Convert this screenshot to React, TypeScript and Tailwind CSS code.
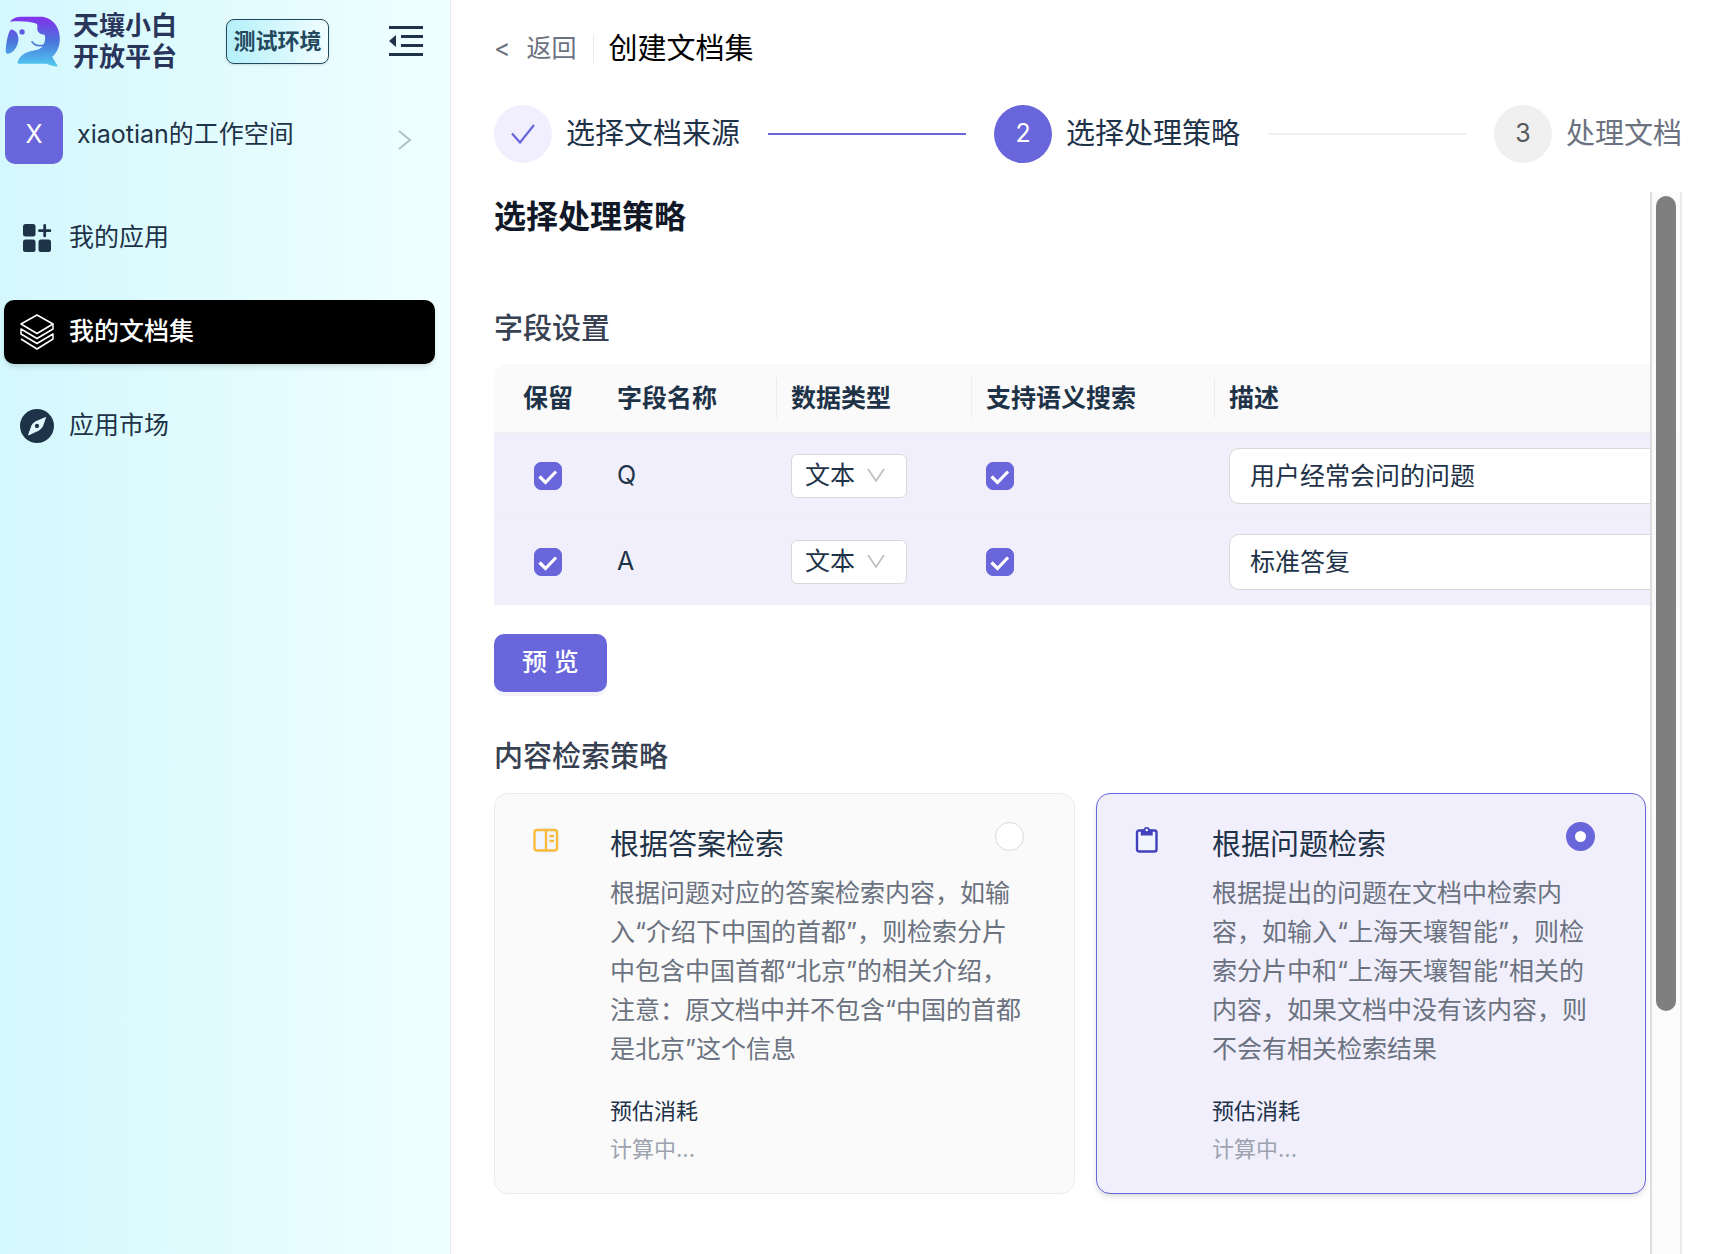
import React, { useState } from 'react';
import clsx from 'clsx';

interface Field {
  name: string;
  keep: boolean;
  semantic: boolean;
  desc: string;
}

interface Strategy {
  id: string;
  title: string;
  desc: string;
  icon: React.ReactNode;
}

const LogoIcon = () => (
  <svg width="56" height="53" viewBox="16 28 168 160" aria-hidden="true">
    <defs>
      <linearGradient id="logo" gradientUnits="userSpaceOnUse" x1="0" y1="33" x2="0" y2="180">
        <stop offset="0" stopColor="#8430ec" />
        <stop offset="0.5" stopColor="#4a74dc" />
        <stop offset="1" stopColor="#50c8f0" />
      </linearGradient>
    </defs>
    <path
      fill="url(#logo)"
      d="M30 48C38 38 50 33 64 33H122C156 33 181 62 181 98C181 122 173 141 158 155L174 181C173 184 170 184 166 183C156 181 148 178 140 175H56C54 175 53 173 54 170C58 152 76 140 100 136C120 133 132 125 134 112C138 102 138 93 134 87C120 87 111 78 113 64C114 58 113 56 109 54C88 47 60 45 30 48Z"
    />
    <path
      fill="url(#logo)"
      d="M33 72C48 73 56 86 56 102C55 125 38 146 22 145C16 143 17 130 20 112C23 94 26 80 33 72Z"
    />
    <circle cx="67" cy="79" r="8" fill="url(#logo)" />
    <path d="M97 109C104 119 118 123 133 119" fill="none" stroke="#4a78dc" strokeWidth="5" strokeLinecap="round" />
  </svg>
);

const CollapseIcon = () => (
  <svg width="34" height="30" viewBox="0 0 34 30" fill="#1e3248" aria-hidden="true">
    <path d="M0 0h34v3H0zM12 9h22v3H12zM12 18h22v3H12zM0 27h34v3H0zM0 15l7-6v12z" />
  </svg>
);

const AppsIcon = () => (
  <svg width="34" height="34" viewBox="0 0 34 34" fill="#1e3248" aria-hidden="true">
    <rect x="3" y="3" width="12.5" height="12.5" rx="2.5" />
    <rect x="3" y="18.5" width="12.5" height="12.5" rx="2.5" />
    <rect x="18.5" y="18.5" width="12.5" height="12.5" rx="2.5" />
    <path d="M24.7 4.5v10.4M19.5 9.7h10.4" stroke="#1e3248" strokeWidth="2.8" strokeLinecap="round" />
  </svg>
);

const LayersIcon = () => (
  <svg width="34" height="36" viewBox="0 0 34 36" fill="none" stroke="#fff" strokeWidth="1.5" strokeLinejoin="round" aria-hidden="true">
    <path d="M17 1L33 10 17 19.5 1 10z" />
    <path d="M33 10v5L17 24.5 1 15v5l16 9.5L33 20v5L17 35 1 25" />
  </svg>
);

const CompassIcon = () => (
  <svg width="34" height="34" viewBox="0 0 35 35" aria-hidden="true">
    <circle cx="17.5" cy="17.5" r="17.5" fill="#1e3248" />
    <path
      d="M26.3 8.8L23 18.2Q21.5 20.5 19.5 21.7L8.8 26.7L12.3 17Q13.5 14.5 16 13.2Z"
      fill="#e0f9fd"
      stroke="#e0f9fd"
      strokeLinejoin="round"
    />
    <circle cx="17.5" cy="17.5" r="2.2" fill="#1e3248" />
  </svg>
);

const BookIcon = () => (
  <svg width="30" height="30" viewBox="0 0 30 30" fill="none" stroke="#f8bb3c" strokeWidth="2.4" aria-hidden="true">
    <circle cx="15" cy="14.5" r="14.5" fill="#f0f5ff" stroke="none" />
    <rect x="3.5" y="4" width="22.5" height="20.5" rx="2.5" />
    <path d="M15 4v20.5M18.5 10h4.5M18.5 15h4.5" />
  </svg>
);

const ClipboardIcon = () => (
  <svg width="30" height="30" viewBox="0 0 30 30" aria-hidden="true">
    <circle cx="14" cy="14.5" r="14" fill="#f0f5ff" />
    <rect x="4" y="4.5" width="19.5" height="21" rx="2" fill="none" stroke="#4340bd" strokeWidth="2.4" />
    <path d="M7.8 3.5h2.7a3.4 3.4 0 0 1 6.5 0h2.700v6H7.800z" fill="#4340bd" />
    <circle cx="13.75" cy="4" r="1.3" fill="#f0f5ff" />
  </svg>
);

const navItems = [
  { label: '我的应用', icon: <AppsIcon /> },
  { label: '我的文档集', icon: <LayersIcon />, active: true },
  { label: '应用市场', icon: <CompassIcon /> },
];

const steps = [
  { label: '选择文档来源', status: 'done' },
  { label: '选择处理策略', status: 'active' },
  { label: '处理文档', status: 'wait' },
];

const strategies: Strategy[] = [
  {
    id: 'answer',
    title: '根据答案检索',
    desc: '根据问题对应的答案检索内容，如输\n入“介绍下中国的首都”，则检索分片\n中包含中国首都“北京”的相关介绍，\n注意：原文档中并不包含“中国的首都\n是北京”这个信息',
    icon: <BookIcon />,
  },
  {
    id: 'question',
    title: '根据问题检索',
    desc: '根据提出的问题在文档中检索内\n容，如输入“上海天壤智能”，则检\n索分片中和“上海天壤智能”相关的\n内容，如果文档中没有该内容，则\n不会有相关检索结果',
    icon: <ClipboardIcon />,
  },
];

const Checkbox: React.FC<{ checked: boolean; label: string; onChange: () => void }> = ({ checked, label, onChange }) => (
  <label className="grid size-7">
    <input
      type="checkbox"
      aria-label={label}
      checked={checked}
      onChange={onChange}
      className="col-start-1 row-start-1 size-7 appearance-none rounded-[7px] border border-[#d9d9d9] bg-white checked:border-[#6965db] checked:bg-[#6965db]"
    />
    {checked && (
      <svg viewBox="0 0 28 28" fill="none" stroke="#fff" strokeWidth="3.2" className="pointer-events-none col-start-1 row-start-1 size-7">
        <path d="M5.5 14.5l6 6L22 9.5" />
      </svg>
    )}
  </label>
);

const Sidebar: React.FC = () => (
  <aside className="w-[451px] shrink-0 border-r border-[#e3eaed] bg-gradient-to-r from-[#d3f8fd] to-[#f0ffff]">
    <div className="flex h-[82px] items-center pl-[5px] pr-[27px]">
      <LogoIcon />
      <div className="ml-3 text-[26px] font-bold leading-[31px] text-[#29355a]">
        <p>天壤小白</p>
        <p>开放平台</p>
      </div>
      <span className="ml-[49px] flex h-[45px] w-[103px] items-center justify-center rounded-lg border border-[#23485e] bg-gradient-to-r from-[#b4f0f9] to-[#f0fdff] text-[22px] font-bold text-[#23485e] shadow-sm">
        测试环境
      </span>
      <button type="button" aria-label="收起菜单" className="ml-auto">
        <CollapseIcon />
      </button>
    </div>

    <button type="button" className="mt-6 flex w-full items-center pl-[5px] pr-[38px] text-[25px] text-[#1e3248]">
      <span className="flex size-[58px] items-center justify-center rounded-[10px] bg-[#6965db] text-white">X</span>
      <span className="ml-[14px]">xiaotian的工作空间</span>
      <svg width="14" height="20" viewBox="0 0 14 20" fill="none" stroke="#b3bfc2" strokeWidth="2" className="ml-auto mt-[10px]">
        <path d="M1 1l11 9L1 19" />
      </svg>
    </button>

    <nav className="mt-[42px] flex flex-col gap-[30px] pl-1 pr-[15px]">
      {navItems.map((item) => (
        <a
          key={item.label}
          href="#"
          className={clsx(
            'flex h-16 items-center gap-[15px] rounded-[10px] pl-4 text-[25px]',
            item.active ? 'bg-black font-medium text-white shadow-md' : 'text-[#1e3248]'
          )}
        >
          {item.icon}
          {item.label}
        </a>
      ))}
    </nav>
  </aside>
);

const Steps: React.FC = () => (
  <ol className="mt-9 flex items-center gap-7 text-[29px]">
    {steps.map((step, index) => (
      <li key={step.label} className={clsx('flex items-center', index < steps.length - 1 && 'flex-1')}>
        <span
          className={clsx(
            'flex size-[58px] shrink-0 items-center justify-center rounded-full text-[25px]',
            step.status === 'done' && 'bg-[#f1effd]',
            step.status === 'active' && 'bg-[#6965db] text-white',
            step.status === 'wait' && 'bg-[#f0f0f0] text-[#595959]'
          )}
        >
          {step.status === 'done' ? (
            <svg width="24" height="20" viewBox="0 0 24 20" fill="none" stroke="#6965db" strokeWidth="2.2">
              <path d="M1 9.5l8 9L23 1" />
            </svg>
          ) : (
            index + 1
          )}
        </span>
        <span className={clsx('ml-[14px] whitespace-nowrap', step.status === 'wait' ? 'text-[#6b7280]' : 'text-[#1e3248]')}>
          {step.label}
        </span>
        {index < steps.length - 1 && (
          <span className={clsx('ml-7 h-[2px] flex-1', step.status === 'done' ? 'bg-[#6965db]' : 'bg-[#f0f0f0]')} />
        )}
      </li>
    ))}
  </ol>
);

const FieldTable: React.FC = () => {
  const [fields, setFields] = useState<Field[]>([
    { name: 'Q', keep: true, semantic: true, desc: '用户经常会问的问题' },
    { name: 'A', keep: true, semantic: true, desc: '标准答复' },
  ]);

  const update = (index: number, patch: Partial<Field>) => {
    setFields(fields.map((f, i) => (i === index ? { ...f, ...patch } : f)));
  };

  return (
    <table className="mt-[13px] w-full table-fixed border-separate border-spacing-0 text-left text-[25px] text-[#1e3248]">
      <colgroup>
        <col className="w-[108px]" />
        <col className="w-[174px]" />
        <col className="w-[195px]" />
        <col className="w-[243px]" />
        <col />
      </colgroup>
      <thead>
        <tr className="h-[69px] [&>th]:border-b [&>th]:border-[#f0f0f0] [&>th]:bg-[#fafafa] [&>th]:font-bold">
          <th className="rounded-tl-[14px] pt-[2px] text-center">保留</th>
          <th className="pl-[15px] pt-[2px]">字段名称</th>
          {['数据类型', '支持语义搜索', '描述'].map((title) => (
            <th key={title}>
              <div className="flex h-10 items-center border-l border-[#ececec] pl-[14px] pt-[2px]">{title}</div>
            </th>
          ))}
        </tr>
      </thead>
      <tbody>
        {fields.map((field, index) => (
          <tr key={field.name} className="h-[86px] [&>td]:border-b [&>td]:border-[#efeeef] [&>td]:bg-[#f1effc]">
            <td className="pl-10">
              <Checkbox label={`保留 ${field.name}`} checked={field.keep} onChange={() => update(index, { keep: !field.keep })} />
            </td>
            <td className="pl-[15px]">{field.name}</td>
            <td className="pl-[15px]">
              <div className="grid h-11 w-[116px] items-center rounded-md border border-[#d9d9d9] bg-white">
                <select aria-label={`数据类型 ${field.name}`} className="col-start-1 row-start-1 h-full w-full appearance-none bg-transparent pl-[13px]">
                  <option>文本</option>
                </select>
                <svg width="18" height="15" viewBox="0 0 18 15" fill="none" stroke="#bfbfbf" strokeWidth="1.8" className="pointer-events-none col-start-1 row-start-1 mr-[21px] justify-self-end">
                  <path d="M1 1l8 12L17 1" />
                </svg>
              </div>
            </td>
            <td className="pl-[15px]">
              <Checkbox label={`支持语义搜索 ${field.name}`} checked={field.semantic} onChange={() => update(index, { semantic: !field.semantic })} />
            </td>
            <td className="px-[15px]">
              <input
                type="text"
                aria-label={`描述 ${field.name}`}
                value={field.desc}
                onChange={(e) => update(index, { desc: e.target.value })}
                className="block h-14 w-full rounded-[10px] border border-[#d9d9d9] bg-white px-5 pb-[3px]"
              />
            </td>
          </tr>
        ))}
      </tbody>
    </table>
  );
};

const StrategyCard: React.FC<{ strategy: Strategy; selected: boolean; onSelect: () => void }> = ({ strategy, selected, onSelect }) => (
  <label
    className={clsx(
      'flex items-start rounded-[14px] border pb-[25px] pl-9 pr-[50px] pt-7',
      selected ? 'border-[#6965db] bg-[#f1effc] shadow-md' : 'border-[#ebebeb] bg-[#fafafa]'
    )}
  >
    <span className="mt-1 shrink-0">{strategy.icon}</span>
    <div className="ml-[49px] min-w-0 flex-1">
      <div className="flex items-start justify-between">
        <h3 className="text-[29px] leading-[45px] text-[#1e3248]">{strategy.title}</h3>
        <input
          type="radio"
          name="strategy"
          checked={selected}
          onChange={onSelect}
          className="size-[29px] shrink-0 appearance-none rounded-full border border-[#d9d9d9] bg-white checked:border-[9px] checked:border-[#6965db]"
        />
      </div>
      <p className="mt-[7px] whitespace-pre text-[25px] leading-[39px] text-[#6b7280]">{strategy.desc}</p>
      <p className="mt-[23px] text-[22px] leading-[38px] text-[#1e3248]">预估消耗</p>
      <p className="text-[22px] leading-[38px] text-[#9ca3af]">计算中...</p>
    </div>
  </label>
);

export default function App() {
  const [selected, setSelected] = useState('question');

  return (
    <div className="flex min-h-screen bg-white font-[Inter,'Noto_Sans_CJK_SC',sans-serif]">
      <Sidebar />

      <main className="flex min-w-0 flex-1 flex-col pl-[43px] pr-7 pt-[29px]">
        <header className="flex h-10 items-center">
          <a href="#" className="flex items-center gap-4 text-[25px] text-[#6b7280]">
            <span>&lt;</span>
            <span>返回</span>
          </a>
          <span className="ml-4 h-7 w-px bg-[#ebebeb]" />
          <h1 className="ml-[15px] text-[29px] text-black">创建文档集</h1>
        </header>

        <Steps />

        <div className="relative mt-[29px] flex-1">
          <h2 className="text-[32px] font-bold leading-[50px] text-[#111827]">选择处理策略</h2>

          <h3 className="mt-[65px] text-[29px] font-medium leading-[44px] text-[#374151]">字段设置</h3>
          <FieldTable />
          <button
            type="button"
            className="mt-[29px] h-[58px] rounded-[10px] bg-[#6965db] px-7 text-[25px] font-medium text-white shadow-[0_4px_0_#f3f2fd]"
          >
            预 览
          </button>

          <h3 className="mt-[43px] text-[29px] font-medium leading-[44px] text-[#374151]">内容检索策略</h3>
          <div className="mt-[14px] grid grid-cols-[581fr_550fr] gap-[21px] pr-9">
            {strategies.map((s) => (
              <StrategyCard key={s.id} strategy={s} selected={selected === s.id} onSelect={() => setSelected(s.id)} />
            ))}
          </div>

          {/* 滚动条浮在内容上方 */}
          <div className="absolute inset-y-0 right-0 w-8 border-x-2 border-[#dedede] border-r-[#ebebeb] bg-[#fafafa]/85 px-1 pt-1">
            <div className="h-[77%] rounded-full bg-[#7f7f7f]" />
          </div>
        </div>
      </main>
    </div>
  );
}
